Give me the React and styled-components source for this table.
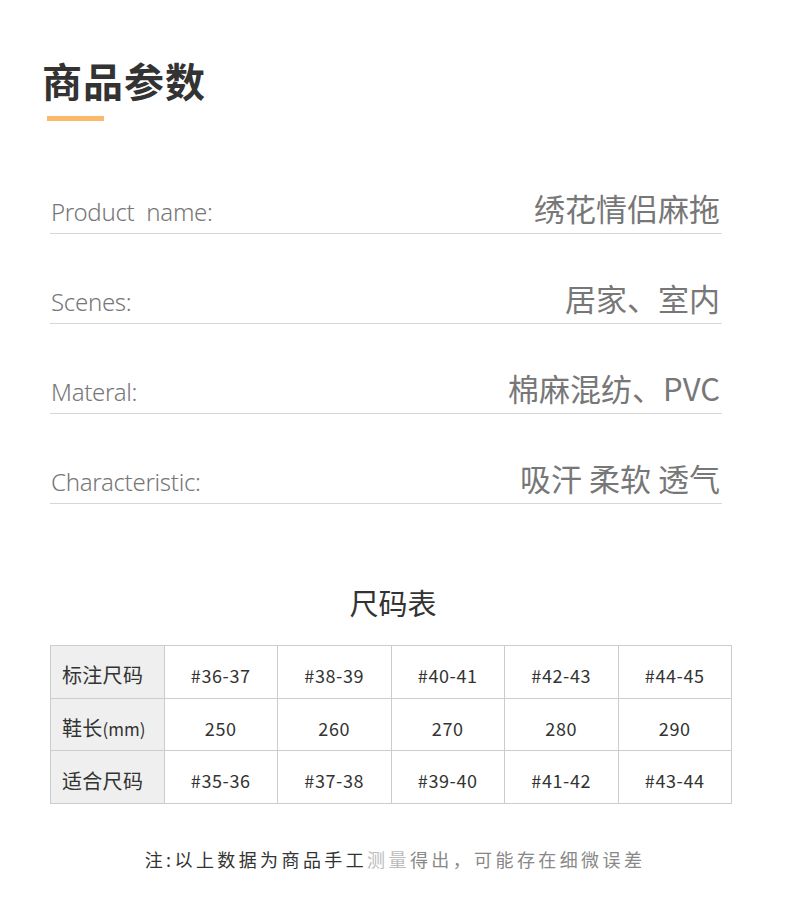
import styled, { createGlobalStyle } from 'styled-components';

const GlobalStyle = createGlobalStyle`
  body {
    margin: 0;
    background: #ffffff;
    font-family: 'Noto Sans CJK SC', 'Noto Sans', sans-serif;
  }
`;

const Page = styled.div`
  width: 790px;
  height: 921px;
  box-sizing: border-box;
  padding: 54px 0 0 0;
  background: #ffffff;
`;

const Header = styled.div`
  padding-left: 42px;
  display: flex;
  flex-direction: column;
  gap: 10px;
`;

const Title = styled.h1`
  margin: 0;
  font-family: 'Noto Sans CJK SC', sans-serif;
  font-weight: 700;
  font-size: 40px;
  line-height: 52px;
  letter-spacing: 1px;
  color: #333333;
`;

const Accent = styled.div`
  width: 57px;
  height: 5px;
  margin-left: 5px;
  background: #fdb96b;
`;

const Specs = styled.div`
  margin: 23px 68px 0 50px;
  display: flex;
  flex-direction: column;
`;

const SpecRow = styled.div`
  height: 90px;
  box-sizing: border-box;
  display: flex;
  justify-content: space-between;
  align-items: flex-end;
  padding-bottom: 6px;
  border-bottom: 1px solid #d6d6d6;
`;

const SpecLabel = styled.span`
  font-family: 'Noto Sans', 'Noto Sans CJK SC', sans-serif;
  font-weight: 300;
  font-size: 24px;
  line-height: 30px;
  letter-spacing: -0.3px;
  color: #777777;
  margin-left: 1px;
  white-space: pre;
`;

const SpecValue = styled.span`
  font-family: 'Noto Sans CJK SC', sans-serif;
  font-weight: 400;
  font-size: 31px;
  line-height: 38px;
  color: #777777;
  margin-right: 2px;
`;

const TableTitle = styled.h2`
  margin: 78px 0 0 0;
  text-align: center;
  font-family: 'Noto Sans CJK SC', sans-serif;
  font-weight: 400;
  font-size: 29px;
  line-height: 40px;
  color: #333333;
  padding-right: 4px;
`;

const SizeTable = styled.table`
  margin: 23px 0 0 50px;
  width: 682px;
  border-collapse: collapse;
  table-layout: fixed;
`;

const Cell = styled.td`
  height: 52.7px;
  box-sizing: border-box;
  padding: ${p => (p.$head ? '6px 0 0 11px' : '6px 0 0 0')};
  border: 1px solid #cccccc;
  text-align: ${p => (p.$head ? 'left' : 'center')};
  font-family: 'Noto Sans CJK SC', sans-serif;
  font-size: ${p => (p.$head ? '20px' : '18px')};
  letter-spacing: ${p => (p.$head ? '0.3px' : '0.6px')};
  color: #333333;
  background: ${p => (p.$head ? '#efefef' : '#ffffff')};
`;

const Unit = styled.span`
  font-size: 17px;
  letter-spacing: 0;
`;

const Note = styled.p`
  margin: 42px 0 0 0;
  text-align: center;
  font-family: 'Noto Sans CJK SC', sans-serif;
  font-size: 18px;
  letter-spacing: 3.4px;
  color: #333333;
`;

const Faded = styled.span`
  color: ${p => p.$tone};
`;

const specs = [
  ['Product  name:', '绣花情侣麻拖'],
  ['Scenes:', '居家、室内'],
  ['Materal:', '棉麻混纺、PVC'],
  ['Characteristic:', '吸汗 柔软 透气'],
];

const rows = [
  ['标注尺码', ['#36-37', '#38-39', '#40-41', '#42-43', '#44-45']],
  [
    <>
      鞋长<Unit>(mm)</Unit>
    </>,
    ['250', '260', '270', '280', '290'],
  ],
  ['适合尺码', ['#35-36', '#37-38', '#39-40', '#41-42', '#43-44']],
];

export default function App() {
  return (
    <Page>
      <GlobalStyle />
      <Header>
        <Title>商品参数</Title>
        <Accent />
      </Header>

      <Specs>
        {specs.map(([label, value]) => (
          <SpecRow key={label}>
            <SpecLabel>{label}</SpecLabel>
            <SpecValue>{value}</SpecValue>
          </SpecRow>
        ))}
      </Specs>

      <TableTitle>尺码表</TableTitle>
      <SizeTable>
        <tbody>
          {rows.map(([head, cells], i) => (
            <tr key={i}>
              <Cell $head>{head}</Cell>
              {cells.map(c => (
                <Cell key={c}>{c}</Cell>
              ))}
            </tr>
          ))}
        </tbody>
      </SizeTable>

      <Note>
        注:以上数据为商品手工<Faded $tone="#bbbbbb">测量</Faded>
        <Faded $tone="#888888">得出，可能存在细微误差</Faded>
      </Note>
    </Page>
  );
}
